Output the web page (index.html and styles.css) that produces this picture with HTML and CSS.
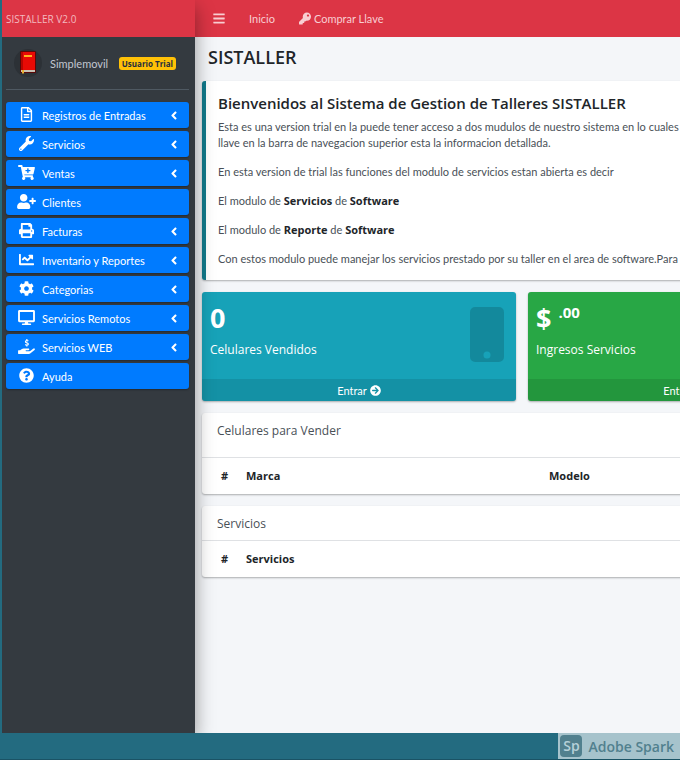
FILE: index.html
```html
<!DOCTYPE html>
<html lang="es">
<head>
<meta charset="utf-8">
<title>SISTALLER</title>
<link rel="stylesheet" href="styles.css">
</head>
<body>
<div class="app">
  <aside class="sidebar">
    <a class="brand" href="#">SISTALLER V2.0</a>
    <div class="side-body">
      <div class="user">
        <svg class="avatar" viewBox="0 0 30 30" aria-hidden="true">
          <circle cx="15" cy="15" r="14" fill="#2c3136"/>
          <rect x="7" y="3" width="16" height="22" rx="1" fill="#5a0808"/>
          <rect x="8" y="4" width="14" height="18" fill="#e80a05"/>
          <path d="M8 4h2v18H8z" fill="#b80500"/>
          <path d="M11 7h8v2h-8z" fill="#ffb020"/>
          <path d="M8 22h14v2H8z" fill="#c9c2b4"/>
          <path d="M9 22h2v4l-1-1-1 1z" fill="#e8b030"/>
        </svg>
        <a class="user-name" href="#">Simplemovil</a>
        <span class="badge">Usuario Trial</span>
      </div>
      <nav>
        <ul class="menu">
          <li><a href="#"><svg class="ico" viewBox="0 0 384 512"><path d="M288 248v28c0 6.600-5.400 12-12 12H108c-6.600 0-12-5.400-12-12v-28c0-6.600 5.400-12 12-12h168c6.600 0 12 5.400 12 12zm-12 72H108c-6.600 0-12 5.400-12 12v28c0 6.600 5.400 12 12 12h168c6.600 0 12-5.400 12-12v-28c0-6.600-5.400-12-12-12zm108-188.100V464c0 26.500-21.500 48-48 48H48c-26.500 0-48-21.500-48-48V48C0 21.500 21.500 0 48 0h204.100C264.800 0 277 5.100 286 14.100L369.900 98c9 8.900 14.100 21.200 14.100 33.900zm-128-80V128h76.100L256 51.900zM336 464V176H232c-13.300 0-24-10.700-24-24V48H48v416h288z"/></svg><span>Registros de Entradas</span><svg class="angle" viewBox="0 0 256 512"><use href="#angle-left"/></svg></a></li>
          <li><a href="#"><svg class="ico" viewBox="0 0 512 512"><path d="M507.730 109.100c-2.240-9.030-13.540-12.090-20.120-5.510l-74.360 74.360-67.880-11.310-11.310-67.880 74.360-74.360c6.620-6.620 3.430-17.900-5.660-20.160-47.380-11.740-99.550.91-136.580 37.930-39.640 39.640-50.550 97.100-34.050 147.200L18.740 402.760c-24.990 24.990-24.990 65.510 0 90.500 24.990 24.990 65.510 24.990 90.500 0l213.210-213.210c50.120 16.710 107.470 5.680 147.370-34.220 37.070-37.070 49.700-89.320 37.910-136.730zM64 472c-13.250 0-24-10.750-24-24 0-13.260 10.750-24 24-24s24 10.740 24 24c0 13.250-10.750 24-24 24z"/></svg><span>Servicios</span><svg class="angle" viewBox="0 0 256 512"><use href="#angle-left"/></svg></a></li>
          <li><a href="#"><svg class="ico" viewBox="0 0 576 512"><path d="M504.717 320H211.572l6.545 32h268.418c15.401 0 26.816 14.301 23.403 29.319l-5.517 24.276C523.112 414.668 536 433.828 536 456c0 31.202-25.519 56.444-56.824 55.994-29.823-.429-54.350-24.631-55.155-54.447-.440-16.287 6.085-31.049 16.803-41.548H231.176C241.553 426.165 248 440.326 248 456c0 31.813-26.528 57.431-58.670 55.938-28.540-1.325-51.751-24.385-53.251-52.917-1.158-22.034 10.436-41.455 28.051-51.586L93.883 64H24C10.745 64 0 53.255 0 40V24C0 10.745 10.745 0 24 0h102.529c11.401 0 21.228 8.021 23.513 19.190L159.208 64H551.990c15.401 0 26.816 14.301 23.403 29.319l-47.273 208C525.637 312.246 515.923 320 504.717 320zM408 168h-48v-40c0-8.837-7.163-16-16-16h-16c-8.837 0-16 7.163-16 16v40h-48c-8.837 0-16 7.163-16 16v16c0 8.837 7.163 16 16 16h48v40c0 8.837 7.163 16 16 16h16c8.837 0 16-7.163 16-16v-40h48c8.837 0 16-7.163 16-16v-16c0-8.837-7.163-16-16-16z"/></svg><span>Ventas</span><svg class="angle" viewBox="0 0 256 512"><use href="#angle-left"/></svg></a></li>
          <li><a href="#"><svg class="ico" viewBox="0 0 640 512"><path d="M624 208h-64v-64c0-8.800-7.200-16-16-16h-32c-8.800 0-16 7.200-16 16v64h-64c-8.800 0-16 7.200-16 16v32c0 8.800 7.200 16 16 16h64v64c0 8.800 7.200 16 16 16h32c8.800 0 16-7.200 16-16v-64h64c8.800 0 16-7.200 16-16v-32c0-8.800-7.200-16-16-16zm-400 48c70.700 0 128-57.300 128-128S294.700 0 224 0 96 57.300 96 128s57.300 128 128 128zm89.600 32h-16.700c-22.200 10.200-46.900 16-72.900 16s-50.600-5.800-72.900-16h-16.700C60.200 288 0 348.200 0 422.400V464c0 26.500 21.500 48 48 48h352c26.500 0 48-21.500 48-48v-41.600c0-74.200-60.200-134.400-134.400-134.400z"/></svg><span>Clientes</span></a></li>
          <li><a href="#"><svg class="ico" viewBox="0 0 512 512"><path d="M448 192V77.250c0-8.490-3.370-16.620-9.370-22.630L393.370 9.370c-6-6-14.140-9.370-22.630-9.370H96C78.330 0 64 14.330 64 32v160c-35.350 0-64 28.650-64 64v112c0 8.840 7.160 16 16 16h48v96c0 17.670 14.330 32 32 32h320c17.670 0 32-14.330 32-32v-96h48c8.840 0 16-7.160 16-16V256c0-35.350-28.650-64-64-64zm-64 256H128v-96h256v96zm0-224H128V64h192v48c0 8.840 7.160 16 16 16h48v96zm48 72c-13.250 0-24-10.750-24-24 0-13.260 10.750-24 24-24s24 10.740 24 24c0 13.250-10.750 24-24 24z"/></svg><span>Facturas</span><svg class="angle" viewBox="0 0 256 512"><use href="#angle-left"/></svg></a></li>
          <li><a href="#"><svg class="ico" viewBox="0 0 512 512"><path d="M496 384H64V80c0-8.840-7.160-16-16-16H16C7.160 64 0 71.160 0 80v336c0 17.670 14.330 32 32 32h464c8.840 0 16-7.160 16-16v-32c0-8.840-7.160-16-16-16zM464 96H345.940c-21.380 0-32.090 25.850-16.970 40.970l32.400 32.400L288 242.750l-73.370-73.370c-12.500-12.500-32.760-12.500-45.250 0l-68.690 68.690c-6.250 6.250-6.250 16.380 0 22.630l22.620 22.620c6.250 6.250 16.380 6.250 22.630 0L192 237.250l73.370 73.370c12.500 12.500 32.760 12.500 45.250 0l96-96 32.400 32.400c15.120 15.120 40.970 4.410 40.970-16.970V112c.010-8.840-7.150-16-15.990-16z"/></svg><span>Inventario y Reportes</span><svg class="angle" viewBox="0 0 256 512"><use href="#angle-left"/></svg></a></li>
          <li><a href="#"><svg class="ico" viewBox="0 0 512 512"><path d="M487.400 315.700l-42.600-24.600c4.300-23.200 4.300-47 0-70.200l42.600-24.600c4.900-2.800 7.100-8.600 5.500-14-11.100-35.600-30-67.800-54.700-94.600-3.800-4.100-10-5.100-14.800-2.300L380.800 110c-17.900-15.400-38.500-27.300-60.800-35.100V25.800c0-5.600-3.900-10.500-9.400-11.700-36.700-8.200-74.300-7.800-109.200 0-5.500 1.200-9.400 6.100-9.400 11.700V75c-22.200 7.900-42.800 19.800-60.800 35.100L88.700 85.500c-4.900-2.800-11-1.900-14.800 2.300-24.700 26.700-43.600 58.900-54.700 94.600-1.700 5.400.6 11.200 5.500 14L67.300 221c-4.300 23.200-4.300 47 0 70.200l-42.600 24.600c-4.900 2.800-7.100 8.600-5.500 14 11.100 35.600 30 67.800 54.700 94.600 3.800 4.100 10 5.100 14.800 2.300l42.600-24.600c17.900 15.400 38.500 27.300 60.800 35.100v49.200c0 5.600 3.900 10.500 9.400 11.700 36.700 8.200 74.300 7.800 109.200 0 5.500-1.200 9.400-6.100 9.400-11.700v-49.200c22.200-7.900 42.800-19.800 60.800-35.100l42.600 24.600c4.900 2.800 11 1.900 14.800-2.300 24.700-26.700 43.600-58.900 54.700-94.600 1.500-5.500-.7-11.300-5.600-14.100zM256 336c-44.100 0-80-35.900-80-80s35.900-80 80-80 80 35.900 80 80-35.900 80-80 80z"/></svg><span>Categorias</span><svg class="angle" viewBox="0 0 256 512"><use href="#angle-left"/></svg></a></li>
          <li><a href="#"><svg class="ico" viewBox="0 0 576 512"><path d="M528 0H48C21.500 0 0 21.500 0 48v320c0 26.500 21.500 48 48 48h192l-16 48h-72c-13.300 0-24 10.700-24 24s10.700 24 24 24h272c13.300 0 24-10.700 24-24s-10.700-24-24-24h-72l-16-48h192c26.500 0 48-21.500 48-48V48c0-26.500-21.500-48-48-48zm-16 352H64V64h448v288z"/></svg><span>Servicios Remotos</span><svg class="angle" viewBox="0 0 256 512"><use href="#angle-left"/></svg></a></li>
          <li><a href="#"><svg class="ico" viewBox="0 0 576 512"><path d="M565.300 328.100c-11.800-10.700-30.200-10-42.600 0L430.300 402c-11.300 9.100-25.400 14-40 14H272c-8.800 0-16-7.200-16-16s7.200-16 16-16h78.300c15.900 0 30.700-10.900 33.300-26.600 3.300-20-12.100-37.400-31.600-37.400H192c-27 0-53.100 9.300-74.100 26.300L71.400 384H16c-8.800 0-16 7.200-16 16v96c0 8.800 7.200 16 16 16h356.800c14.500 0 28.600-4.900 40-14L564 377c15.200-12.100 16.400-35.300 1.300-48.900z"/><path d="M350 74c-20-22-94-26-98 20-3 46 98 30 98 76 0 44-76 44-104 16M300 0v48M300 208v48" fill="none" stroke="#fff" stroke-width="42"/></svg><span>Servicios WEB</span><svg class="angle" viewBox="0 0 256 512"><use href="#angle-left"/></svg></a></li>
          <li><a href="#"><svg class="ico" viewBox="0 0 512 512"><path d="M504 256c0 136.997-111.043 248-248 248S8 392.997 8 256C8 119.083 119.043 8 256 8s248 111.083 248 248zM262.655 90c-54.497 0-89.255 22.957-116.549 63.758-3.536 5.286-2.353 12.415 2.715 16.258l34.699 26.310c5.205 3.947 12.621 3.008 16.665-2.122 17.864-22.658 30.113-35.797 57.303-35.797 20.429 0 45.698 13.148 45.698 32.958 0 14.976-12.363 22.667-32.534 33.976C247.128 238.528 216 254.941 216 296v4c0 6.627 5.373 12 12 12h56c6.627 0 12-5.373 12-12v-1.333c0-28.462 83.186-29.647 83.186-106.667 0-58.002-60.165-102-116.531-102zM256 338c-25.365 0-46 20.635-46 46 0 25.364 20.635 46 46 46s46-20.636 46-46c0-25.365-20.635-46-46-46z"/></svg><span>Ayuda</span></a></li>
        </ul>
      </nav>
    </div>
  </aside>
  <div class="page">
    <header class="topbar">
      <button class="toggle" type="button" aria-label="Menu"><svg viewBox="0 0 448 512"><path d="M16 132h416c8.800 0 16-7.200 16-16V76c0-8.800-7.200-16-16-16H16C7.200 60 0 67.200 0 76v40c0 8.800 7.200 16 16 16zm0 160h416c8.800 0 16-7.200 16-16v-40c0-8.800-7.200-16-16-16H16c-8.800 0-16 7.200-16 16v40c0 8.800 7.200 16 16 16zm0 160h416c8.800 0 16-7.200 16-16v-40c0-8.800-7.200-16-16-16H16c-8.800 0-16 7.200-16 16v40c0 8.800 7.200 16 16 16z"/></svg></button>
      <a href="#">Inicio</a>
      <a href="#"><svg viewBox="0 0 512 512"><path d="M512 176.001C512 273.203 433.202 352 336 352c-11.220 0-22.190-1.062-32.827-3.069l-24.012 27.014A23.999 23.999 0 0 1 261.223 384H224v40c0 13.255-10.745 24-24 24h-40v40c0 13.255-10.745 24-24 24H24c-13.255 0-24-10.745-24-24v-78.059c0-6.365 2.529-12.470 7.029-16.971l161.802-161.802C163.108 213.814 160 195.271 160 176 160 78.798 238.797.001 335.999 0 433.488-.001 512 78.511 512 176.001zM336 128c0 26.510 21.490 48 48 48s48-21.490 48-48-21.490-48-48-48-48 21.490-48 48z"/></svg>Comprar Llave</a>
    </header>
    <main class="content">
      <h1>SISTALLER</h1>
      <section class="callout">
        <h2>Bienvenidos al Sistema de Gestion de Talleres SISTALLER</h2>
        <p>Esta es una version trial en la puede tener acceso a dos mudulos de nuestro sistema en lo cuales<br>llave en la barra de navegacion superior esta la informacion detallada.</p>
        <p>En esta version de trial las funciones del modulo de servicios estan abierta es decir</p>
        <p>El modulo de <b>Servicios</b> de <b>Software</b></p>
        <p>El modulo de <b>Reporte</b> de <b>Software</b></p>
        <p>Con estos modulo puede manejar los servicios prestado por su taller en el area de software.Para</p>
      </section>
      <div class="boxes">
        <section class="box info">
          <div class="box-body">
            <div><h3>0</h3><p>Celulares Vendidos</p></div>
            <svg class="phone" viewBox="0 0 34 55" aria-hidden="true"><path fill-rule="evenodd" d="M5 0h24a5 5 0 0 1 5 5v45a5 5 0 0 1-5 5H5a5 5 0 0 1-5-5V5a5 5 0 0 1 5-5zM17 44.500a3.500 3.500 0 1 0 0 7 3.500 3.500 0 0 0 0-7z"/></svg>
          </div>
          <a class="box-foot" href="#">Entrar <svg viewBox="0 0 512 512"><use href="#arrow-circle"/></svg></a>
        </section>
        <section class="box success">
          <div class="box-body">
            <div><h3>$ <sup>.00</sup></h3><p>Ingresos Servicios</p></div>
          </div>
          <a class="box-foot" href="#">Entrar <svg viewBox="0 0 512 512"><use href="#arrow-circle"/></svg></a>
        </section>
      </div>
      <section class="card">
        <h2 class="card-title tall">Celulares para Vender</h2>
        <table><thead><tr><th class="num">#</th><th class="brand-col">Marca</th><th>Modelo</th></tr></thead></table>
      </section>
      <section class="card">
        <h2 class="card-title">Servicios</h2>
        <table><thead><tr><th class="num">#</th><th>Servicios</th></tr></thead></table>
      </section>
    </main>
  </div>
</div>
<footer class="strip">
  <div class="mark"><span class="mark-logo">Sp</span><span>Adobe Spark</span></div>
</footer>
<svg class="defs" aria-hidden="true">
  <defs>
    <path id="angle-left" d="M31.700 239l136-136c9.400-9.400 24.600-9.400 33.900 0l22.600 22.600c9.400 9.400 9.400 24.600 0 33.900L127.900 256l96.400 96.400c9.400 9.400 9.400 24.600 0 33.900L201.700 409c-9.400 9.400-24.600 9.400-33.900 0l-136-136c-9.500-9.400-9.500-24.600-.1-34z"/>
    <path id="arrow-circle" d="M256 8c137 0 248 111 248 248S393 504 256 504 8 393 8 256 119 8 256 8zm-28.900 143.600l75.500 72.400H120c-13.300 0-24 10.700-24 24v16c0 13.300 10.700 24 24 24h182.600l-75.500 72.400c-9.700 9.300-9.900 24.800-.4 34.300l11 10.900c9.400 9.400 24.600 9.400 33.900 0L404.300 273c9.400-9.400 9.400-24.600 0-33.900L271.600 106.300c-9.400-9.400-24.600-9.400-33.900 0l-11 10.900c-9.500 9.600-9.300 25.100.4 34.400z"/>
  </defs>
</svg>
</body>
</html>
```
FILE: styles.css
```css
* { box-sizing: border-box; }
body {
  margin: 0;
  min-height: 100vh;
  display: flex;
  flex-direction: column;
  background: #236b80;
  color: #212529;
  font: 11px/17px Lato, "Noto Sans", sans-serif;
  overflow-x: hidden;
}
h1, h2, h3, p, ul { margin: 0; padding: 0; }
h1, h2, h3, b, th, .box p, .badge, .brand, .mark { font-family: "Open Sans", "Noto Sans", sans-serif; }
a { color: inherit; text-decoration: none; }
svg { fill: currentColor; }
.defs { position: absolute; width: 0; height: 0; }

.app { flex: 1; display: flex; margin-left: 2px; background: #f4f6f9; overflow: hidden; }

.sidebar {
  flex: 0 0 193px;
  background: #343a40;
  color: #c2c7d0;
  box-shadow: 0 8px 18px rgba(0, 0, 0, .4);
  z-index: 1;
}
.brand {
  display: block;
  height: 37px;
  padding: 0 4px;
  background: #dc3545;
  color: #f3b9bf;
  font-size: 10px;
  line-height: 38px;
}
.side-body { padding: 0 6px 0 4px; }
.user {
  display: flex;
  align-items: center;
  height: 53px;
  margin-bottom: 12px;
  padding: 0 13px 0 7px;
  border-bottom: 1px solid #4f5962;
}
.avatar { width: 30px; height: 30px; margin-right: 7px; }
.user-name { flex: 1; }
.badge {
  padding: 0 3px;
  border-radius: 3px;
  background: #ffc107;
  color: #1f2d3d;
  font-size: 8px;
  font-weight: 700;
  line-height: 13px;
}
.menu { list-style: none; display: grid; gap: 3px; }
.menu a {
  display: flex;
  align-items: center;
  height: 26px;
  padding: 0 11px;
  border-radius: 3px;
  background: #007bff;
  color: #fff;
  box-shadow: 0 1px 2px rgba(0, 0, 0, .3);
}
.menu span { flex: 1; margin-left: 6px; }
.ico { width: 19px; height: 15px; margin-bottom: 2px; }
.angle { width: 8px; height: 13px; }

.page { flex: 1; min-width: 0; overflow: hidden; }
.topbar {
  display: flex;
  align-items: center;
  gap: 24px;
  height: 37px;
  padding-left: 18px;
  background: #dc3545;
  color: #f8ced2;
}
.topbar a { display: flex; align-items: center; gap: 3px; }
.topbar svg { width: 12px; height: 13px; }
.toggle { display: flex; padding: 0; border: 0; background: none; color: inherit; }

.content { min-width: 980px; padding: 8px 7px; }
h1 { margin: 0 0 11px 6px; font-size: 18px; line-height: 25px; font-weight: 600; }

.callout, .box, .card {
  border-radius: 3px;
  background: #fff;
  box-shadow: 0 1px 2px rgba(0, 0, 0, .3);
  margin-bottom: 12px;
}
.callout { padding: 12px 12px 13px; border-left: 4px solid #117a8b; white-space: nowrap; color: #495057; }
.callout h2 { margin-bottom: 6px; font-size: 15px; line-height: 20px; font-weight: 600; color: #212529; }
.callout p { line-height: 16px; }
.callout p + p { margin-top: 13px; }
.callout b { color: #212529; line-height: 11px; }

.boxes { display: grid; grid-template-columns: repeat(3, 1fr); gap: 12px; }
.box { overflow: hidden; color: #fff; }
.info { background: #17a2b8; }
.success { background: #28a745; }
.box-body { display: flex; justify-content: space-between; height: 87px; padding: 8px 8px 0; }
.box h3 { font-size: 27px; line-height: 36px; font-weight: 700; }
.box sup { font-size: 15px; line-height: 15px; }
.box p { margin-top: 5px; font-size: 12px; }
.phone { width: 34px; height: 55px; margin: 7px 4px 0 0; color: rgba(0, 0, 0, .15); }
.box-foot {
  display: flex;
  justify-content: center;
  align-items: center;
  gap: 3px;
  height: 22px;
  background: rgba(0, 0, 0, .1);
}
.box-foot svg { width: 11px; height: 11px; }

.card-title {
  height: 35px;
  padding: 9px 15px;
  border-bottom: 1px solid #dfe1e4;
  color: #495057;
  font-size: 12px;
  font-weight: 400;
  line-height: 18px;
}
.tall { height: 45px; }
table { width: 100%; border-collapse: collapse; table-layout: fixed; }
th { padding: 9px; text-align: left; line-height: 18px; }
.num { width: 35px; text-align: right; }
.brand-col { width: 303px; }

.strip { display: flex; justify-content: flex-end; height: 27px; border-bottom: 1px solid #1a5365; }
.mark {
  display: flex;
  align-items: center;
  gap: 6px;
  padding: 0 6px 0 2px;
  background: #a6c3cc;
  color: #51808e;
  font-size: 14px;
  font-weight: 600;
}
.mark-logo {
  width: 22px;
  border-radius: 4px;
  background: #51808e;
  color: #b5d0d8;
  line-height: 22px;
  text-align: center;
}
```
